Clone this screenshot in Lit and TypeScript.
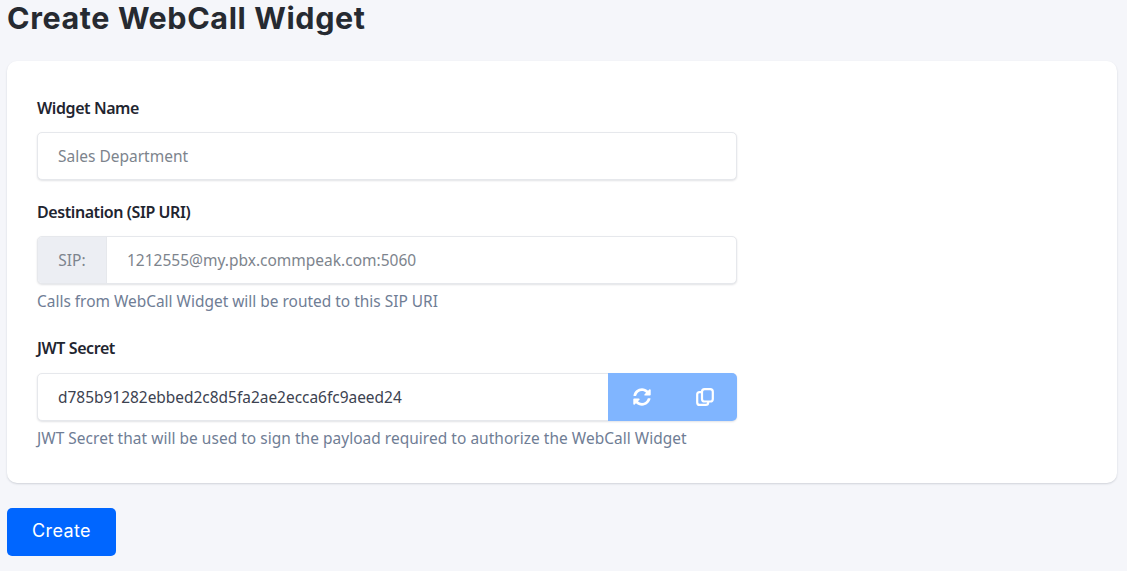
import { LitElement, html, css } from "lit";
import { customElement } from "lit/decorators.js";

@customElement("app-root")
export class AppRoot extends LitElement {
  static styles = css`
    :host {
      display: block;
      height: 571px;
      overflow: hidden;
      background: #f5f6fa;
      font-family: "Noto Sans", sans-serif;
      font-size: 16px;
      color: #212529;
    }
    .page {
      display: flex;
      flex-direction: column;
      align-items: flex-start;
      padding: 0 10px 0 7px;
    }
    h1 {
      margin: 0;
      height: 61px;
      box-sizing: border-box;
      font-family: "Inter", sans-serif;
      font-weight: 700;
      font-size: 30.5px;
      line-height: 35px;
      color: #262a31;
      letter-spacing: 0.6px;
      white-space: nowrap;
    }
    .card {
      align-self: stretch;
      box-sizing: border-box;
      height: 422px;
      background: #fff;
      border-radius: 10px;
      box-shadow: 0 1px 2px rgba(40, 50, 70, 0.18);
      padding: 35px 30px 0;
    }
    .form {
      width: 700px;
      display: flex;
      flex-direction: column;
    }
    label {
      display: block;
      height: 25px;
      line-height: 24px;
      font-size: 16px;
      font-weight: 600;
      letter-spacing: -0.42px;
      color: #1f2530;
      margin-bottom: 11px;
    }
    .group { margin-bottom: 20px; }
    .group.tight { margin-bottom: 23px; }
    .group.jwt label { margin-bottom: 12px; }
    .input {
      box-sizing: border-box;
      height: 48px;
      display: flex;
      align-items: stretch;
      background: #fff;
      border: 1px solid #e6e8ec;
      border-radius: 5px;
      box-shadow: 0 1px 2px rgba(40, 50, 70, 0.14);
    }
    .value {
      flex: 1;
      display: flex;
      align-items: center;
      padding-left: 20px;
      font-size: 15.5px;
      color: #7d848d;
      white-space: nowrap;
    }
    .value.dark { color: #3c4250; font-size: 15.45px; }
    .prefix {
      width: 69px;
      box-sizing: border-box;
      display: flex;
      align-items: center;
      justify-content: center;
      background: #eceef3;
      border-right: 1px solid #e6e8ec;
      border-radius: 4px 0 0 4px;
      color: #7d848d;
      font-size: 15.5px;
    }
    .buttons {
      width: 129px;
      margin: -1px;
      display: flex;
      background: #80b5ff;
      border-radius: 0 5px 5px 0;
    }
    .icon {
      width: 50%;
      box-sizing: border-box;
      display: flex;
      align-items: center;
      justify-content: center;
    }
    .icon.sync { padding-left: 3px; }
    .icon svg { display: block; }
    .hint {
      margin-top: 5px;
      line-height: 24px;
      font-size: 15.45px;
      color: #6f7d95;
      white-space: nowrap;
    }
    .hint.long { letter-spacing: 0.045px; }
    .create {
      margin-top: 25px;
      width: 109px;
      height: 48px;
      padding: 0 0 3px;
      border: none;
      border-radius: 5px;
      background: #0066ff;
      color: #fff;
      font-family: "Inter", sans-serif;
      font-size: 18px;
      font-weight: 400;
      letter-spacing: 0.4px;
    }
  `;

  render() {
    return html`
      <div class="page">
        <h1>Create WebCall Widget</h1>
        <div class="card">
          <div class="form">
            <div class="group">
              <label>Widget Name</label>
              <div class="input"><div class="value">Sales Department</div></div>
            </div>
            <div class="group tight">
              <label>Destination (SIP URI)</label>
              <div class="input">
                <div class="prefix">SIP:</div>
                <div class="value">1212555@my.pbx.commpeak.com:5060</div>
              </div>
              <div class="hint">Calls from WebCall Widget will be routed to this SIP URI</div>
            </div>
            <div class="group jwt">
              <label>JWT Secret</label>
              <div class="input">
                <div class="value dark">d785b91282ebbed2c8d5fa2ae2ecca6fc9aeed24</div>
                <div class="buttons">
                  <div class="icon sync">
                    <svg width="18" height="18" viewBox="0 0 512 512" fill="#fff">
                      <path d="M370.72 133.28C339.458 104.008 298.888 87.962 255.848 88c-77.458.068-144.328 53.178-162.791 126.85-1.344 5.363-6.122 9.15-11.651 9.15H24.103c-7.498 0-13.194-6.807-11.807-14.176C33.933 94.924 134.813 8 256 8c66.448 0 126.791 26.136 171.315 68.685L463.03 40.97C478.149 25.851 504 36.559 504 57.941V192c0 13.255-10.745 24-24 24H345.941c-21.382 0-32.09-25.851-16.971-40.971l41.75-41.749zM32 296h134.059c21.382 0 32.09 25.851 16.971 40.971l-41.75 41.75c31.262 29.273 71.835 45.319 114.876 45.28 77.418-.07 144.315-53.144 162.787-126.849 1.344-5.363 6.122-9.15 11.651-9.15h57.304c7.498 0 13.194 6.807 11.807 14.176C478.067 417.076 377.187 504 256 504c-66.448 0-126.791-26.136-171.315-68.685L48.97 471.03C33.851 486.149 8 475.441 8 454.059V320c0-13.255 10.745-24 24-24z" />
                    </svg>
                  </div>
                  <div class="icon">
                    <svg width="18" height="18" viewBox="0 0 18 18" fill="none" stroke="#fff" stroke-width="2.2">
                      <rect x="6" y="1.1" width="10.8" height="12.4" rx="2.6" />
                      <path d="M6 4.2H3.6A2.4 2.4 0 0 0 1.2 6.6V14.4A2.5 2.5 0 0 0 3.7 16.9H9.8A2.4 2.4 0 0 0 12.2 14.5V13.5" />
                    </svg>
                  </div>
                </div>
              </div>
              <div class="hint long">JWT Secret that will be used to sign the payload required to authorize the WebCall Widget</div>
            </div>
          </div>
        </div>
        <button class="create">Create</button>
      </div>
    `;
  }
}
